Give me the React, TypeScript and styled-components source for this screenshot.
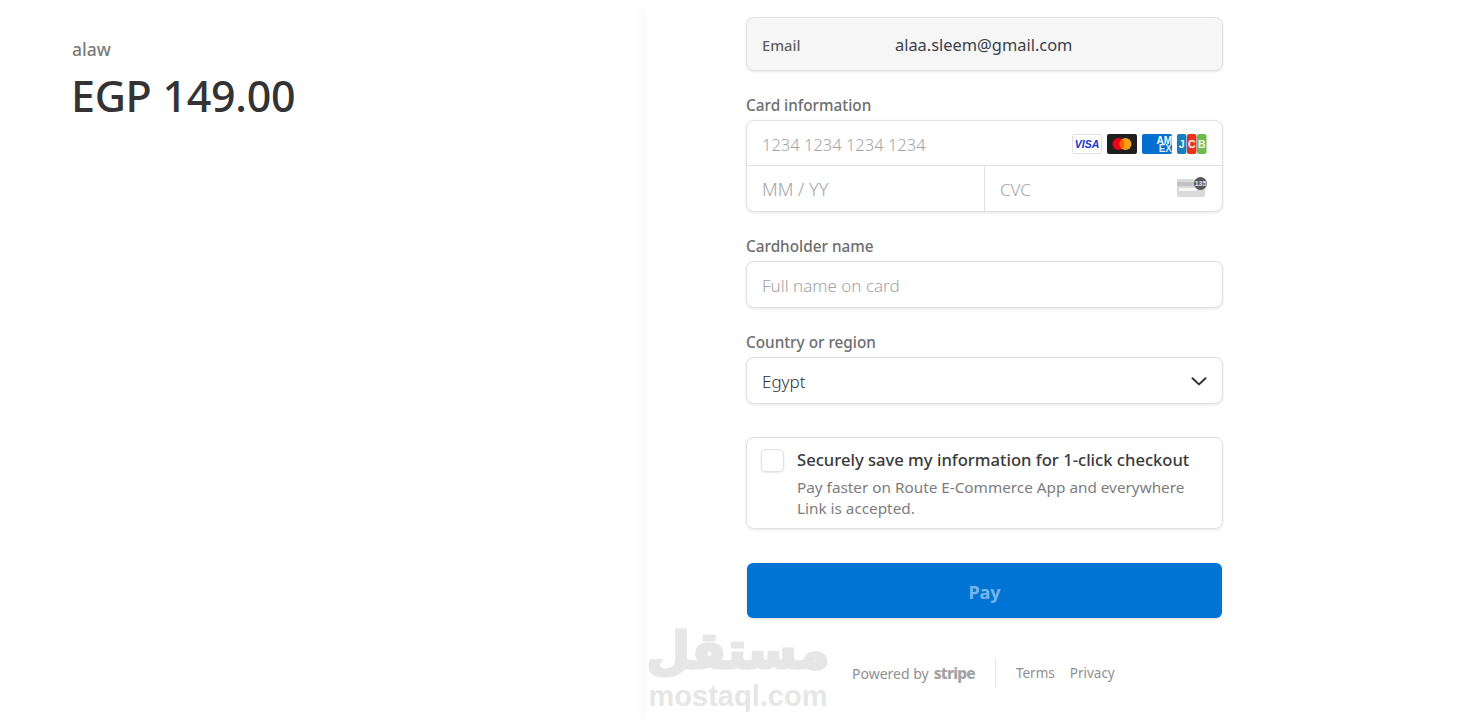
import React from 'react'
import styled, { createGlobalStyle } from 'styled-components'

const GlobalStyle = createGlobalStyle`
    html, body {
        margin: 0;
        padding: 0;
        background: #ffffff;
        overflow: hidden;
    }
    * {
        box-sizing: border-box;
    }
`

const Root = styled.div`
    display: flex;
    width: 1478px;
    height: 726px;
    overflow: hidden;
    font-family: 'Noto Sans', 'Open Sans', sans-serif;
    color: #303030;
`

const Summary = styled.div`
    width: 646px;
    flex-shrink: 0;
    padding: 37px 0 0 72px;
`

const ProductName = styled.div`
    font-size: 17.5px;
    line-height: 24px;
    font-weight: 500;
    color: #7a7c7c;
`

const Price = styled.div`
    margin: 8px 0 0 -1px;
    font-size: 43px;
    line-height: 54px;
    font-weight: 500;
    letter-spacing: -0.3px;
    color: #333333;
`

const Panel = styled.div`
    position: relative;
    flex: 1;
    padding: 17px 0 0 100px;
    box-shadow: -10px 0 14px -8px rgba(0, 0, 0, 0.04);
`

const Form = styled.div`
    width: 477px;
    display: flex;
    flex-direction: column;
`

const EmailBox = styled.div`
    display: flex;
    align-items: center;
    height: 54px;
    padding: 1px 15px 0;
    border-radius: 8px;
    background: #f6f6f6;
    border: 1px solid #e2e2e2;
    box-shadow: 0 1px 3px rgba(0, 0, 0, 0.1);
`

const EmailLabel = styled.span`
    width: 133px;
    font-size: 14.7px;
    font-weight: 500;
    color: #616161;
`

const EmailValue = styled.span`
    font-size: 16.4px;
    color: #3a3f4b;
`

const Field = styled.div<{ $top: number }>`
    margin-top: ${(p) => p.$top}px;
`

const Label = styled.div`
    font-size: 15.3px;
    line-height: 20px;
    font-weight: 500;
    color: #6e6e6e;
    margin-bottom: 5px;
`

const InputShell = styled.div`
    border: 1px solid #e0e0e0;
    border-radius: 8px;
    background: #ffffff;
    box-shadow: 0 1px 3px rgba(0, 0, 0, 0.1);
`

const InputRow = styled.div`
    display: flex;
    align-items: center;
    justify-content: space-between;
    height: 45px;
    padding: 1px 15px 0;
`

const CardNumberRow = styled(InputRow)`
    height: 44px;
    padding-top: 2px;
`

const SplitRow = styled.div`
    display: grid;
    grid-template-columns: 237px 1fr;
    height: 46px;
    border-top: 1px solid #e0e0e0;
`

const SplitCell = styled.div<{ $divided?: boolean }>`
    display: flex;
    align-items: center;
    justify-content: space-between;
    padding: 1px 15px 0;
    border-left: ${(p) => (p.$divided ? '1px solid #e0e0e0' : 'none')};
`

const Placeholder = styled.span<{ $size?: number }>`
    font-size: ${(p) => p.$size ?? 17}px;
    color: #a3a3a3;
    font-weight: 300;
`

const Value = styled.span`
    font-size: 17px;
    font-weight: 300;
    color: #303030;
`

const Brands = styled.div`
    display: flex;
    align-items: center;
    gap: 5px;
`

const CvcGraphic = styled.svg`
    margin-bottom: 5px;
`

const SaveBox = styled.div`
    display: flex;
    gap: 13px;
    height: 92px;
    margin-top: 33px;
    padding: 11px 14px;
    border: 1px solid #e0e0e0;
    border-radius: 8px;
    box-shadow: 0 1px 3px rgba(0, 0, 0, 0.1);
`

const Checkbox = styled.div`
    width: 23px;
    height: 23px;
    flex-shrink: 0;
    border: 1px solid #e0e0e0;
    border-radius: 5px;
    box-shadow: 0 1px 2px rgba(0, 0, 0, 0.1);
`

const SaveText = styled.div`
    display: flex;
    flex-direction: column;
`

const SaveTitle = styled.div`
    font-size: 16.6px;
    line-height: 22px;
    font-weight: 500;
    color: #3a3a3a;
`

const SaveNote = styled.div`
    margin-top: 6px;
    font-size: 15.3px;
    line-height: 21px;
    font-weight: 400;
    color: #7d7d7d;
`

const PayButton = styled.button`
    height: 55px;
    margin: 34px 1px 0;
    padding: 2px 0 0;
    border: none;
    border-radius: 6px;
    background: #0074d4;
    box-shadow: 0 1px 3px rgba(0, 0, 0, 0.15);
    font-family: inherit;
    font-size: 18px;
    font-weight: 700;
    color: #78b5e8;
`

const Footer = styled.div`
    display: flex;
    align-items: center;
    height: 30px;
    margin-top: 40px;
    margin-left: 106px;
    font-size: 14px;
    color: #8f8f8f;
`

const PoweredBy = styled.div`
    display: flex;
    align-items: baseline;
    gap: 5px;
    padding-right: 20px;
    border-right: 1px solid #e6e6e6;
    height: 30px;
    line-height: 30px;
`

const StripeWord = styled.span`
    font-size: 15.5px;
    font-weight: 800;
    letter-spacing: -0.8px;
    color: #a3a3a3;
`

const FooterLinks = styled.div`
    display: flex;
    gap: 15px;
    padding-left: 20px;
    font-size: 13.5px;
`

const Watermark = styled.div`
    position: absolute;
    left: 3px;
    top: 619px;
    width: 178px;
    display: flex;
    flex-direction: column;
    align-items: center;
    color: #e6e6e6;
    font-weight: 700;
`

const WatermarkArabic = styled.div`
    font-family: 'DejaVu Sans', sans-serif;
    font-size: 50px;
    line-height: 64px;
    font-weight: 700;
    white-space: nowrap;
    -webkit-text-stroke: 3px #e6e6e6;
`

const WatermarkLatin = styled.div`
    font-family: 'Liberation Sans', sans-serif;
    font-size: 29px;
    line-height: 26px;
    font-weight: 700;
`

const logoFont = "'Liberation Sans', sans-serif"

function VisaIcon() {
    return (
        <svg width="30" height="20" viewBox="0 0 30 20">
            <rect x="0.5" y="0.5" width="29" height="19" rx="2" fill="#fff" stroke="#dfdfdf" />
            <text x="15" y="14" textAnchor="middle" fontFamily={logoFont} fontSize="10.5" fontWeight="700" fontStyle="italic" fill="#1434cb">VISA</text>
        </svg>
    )
}

function MastercardIcon() {
    return (
        <svg width="30" height="20" viewBox="0 0 30 20">
            <rect width="30" height="20" rx="2" fill="#1f1f1f" />
            <circle cx="11.5" cy="10" r="6" fill="#eb001b" />
            <circle cx="18.5" cy="10" r="6" fill="#f79e1b" />
            <path d="M15 5.1a6 6 0 0 1 0 9.8a6 6 0 0 1 0-9.8z" fill="#ff5f00" />
        </svg>
    )
}

function AmexIcon() {
    return (
        <svg width="30" height="20" viewBox="0 0 30 20">
            <rect width="30" height="20" fill="#016fd0" rx="2" />
            <text x="30" y="9.5" textAnchor="end" fontFamily={logoFont} fontSize="10" fontWeight="700" fill="#fff">AM</text>
            <text x="30" y="18" textAnchor="end" fontFamily={logoFont} fontSize="10" fontWeight="700" fill="#dce9f7">EX</text>
        </svg>
    )
}

function JcbIcon() {
    return (
        <svg width="30" height="20" viewBox="0 0 30 20">
            <rect x="0" width="9.5" height="20" rx="2" fill="#1a7fb8" />
            <rect x="10" width="9.5" height="20" rx="2" fill="#e5341d" />
            <rect x="20" width="9.5" height="20" rx="2" fill="#6dbb4a" />
            <text x="4.7" y="14" textAnchor="middle" fontFamily={logoFont} fontSize="10.5" fontWeight="700" fill="#f2f6f2">J</text>
            <text x="14.7" y="14" textAnchor="middle" fontFamily={logoFont} fontSize="10.5" fontWeight="700" fill="#f2f6f2">C</text>
            <text x="24.7" y="14" textAnchor="middle" fontFamily={logoFont} fontSize="10.5" fontWeight="700" fill="#f2f6f2">B</text>
        </svg>
    )
}

function CvcIcon() {
    return (
        <CvcGraphic width="30" height="20" viewBox="0 0 30 20">
            <rect x="0" y="2" width="28" height="18" rx="2" fill="#dadada" />
            <rect x="0" y="5" width="28" height="4" fill="#c2c2c2" />
            <rect x="2" y="11" width="18" height="3" fill="#f7f7f7" />
            <circle cx="23.5" cy="6.5" r="6.5" fill="#555555" />
            <text x="23.5" y="9" textAnchor="middle" fontFamily={logoFont} fontSize="7" fontWeight="700" fill="#e8e8e8">135</text>
        </CvcGraphic>
    )
}

function SelectChevron() {
    return (
        <svg width="16" height="9" viewBox="0 0 16 9" fill="none">
            <path d="M1.5 1.2L8 7.4L14.5 1.2" stroke="#303030" strokeWidth="2" strokeLinecap="round" strokeLinejoin="round" />
        </svg>
    )
}

export default function App() {
    return (
        <>
            <GlobalStyle />
            <Root>
                <Summary>
                    <ProductName>alaw</ProductName>
                    <Price>EGP 149.00</Price>
                </Summary>
                <Panel>
                    <Form>
                        <EmailBox>
                            <EmailLabel>Email</EmailLabel>
                            <EmailValue>alaa.sleem@gmail.com</EmailValue>
                        </EmailBox>
                        <Field $top={24}>
                            <Label>Card information</Label>
                            <InputShell>
                                <CardNumberRow>
                                    <Placeholder $size={16.5}>1234 1234 1234 1234</Placeholder>
                                    <Brands>
                                        <VisaIcon />
                                        <MastercardIcon />
                                        <AmexIcon />
                                        <JcbIcon />
                                    </Brands>
                                </CardNumberRow>
                                <SplitRow>
                                    <SplitCell>
                                        <Placeholder $size={18}>MM / YY</Placeholder>
                                    </SplitCell>
                                    <SplitCell $divided>
                                        <Placeholder>CVC</Placeholder>
                                        <CvcIcon />
                                    </SplitCell>
                                </SplitRow>
                            </InputShell>
                        </Field>
                        <Field $top={24}>
                            <Label>Cardholder name</Label>
                            <InputShell>
                                <InputRow>
                                    <Placeholder>Full name on card</Placeholder>
                                </InputRow>
                            </InputShell>
                        </Field>
                        <Field $top={24}>
                            <Label>Country or region</Label>
                            <InputShell>
                                <InputRow>
                                    <Value>Egypt</Value>
                                    <SelectChevron />
                                </InputRow>
                            </InputShell>
                        </Field>
                        <SaveBox>
                            <Checkbox />
                            <SaveText>
                                <SaveTitle>Securely save my information for 1-click checkout</SaveTitle>
                                <SaveNote>
                                    Pay faster on Route E-Commerce App and everywhere
                                    <br />
                                    Link is accepted.
                                </SaveNote>
                            </SaveText>
                        </SaveBox>
                        <PayButton>Pay</PayButton>
                        <Footer>
                            <PoweredBy>
                                Powered by <StripeWord>stripe</StripeWord>
                            </PoweredBy>
                            <FooterLinks>
                                <span>Terms</span>
                                <span>Privacy</span>
                            </FooterLinks>
                        </Footer>
                    </Form>
                    <Watermark>
                        <WatermarkArabic>مستقل</WatermarkArabic>
                        <WatermarkLatin>mostaql.com</WatermarkLatin>
                    </Watermark>
                </Panel>
            </Root>
        </>
    )
}
